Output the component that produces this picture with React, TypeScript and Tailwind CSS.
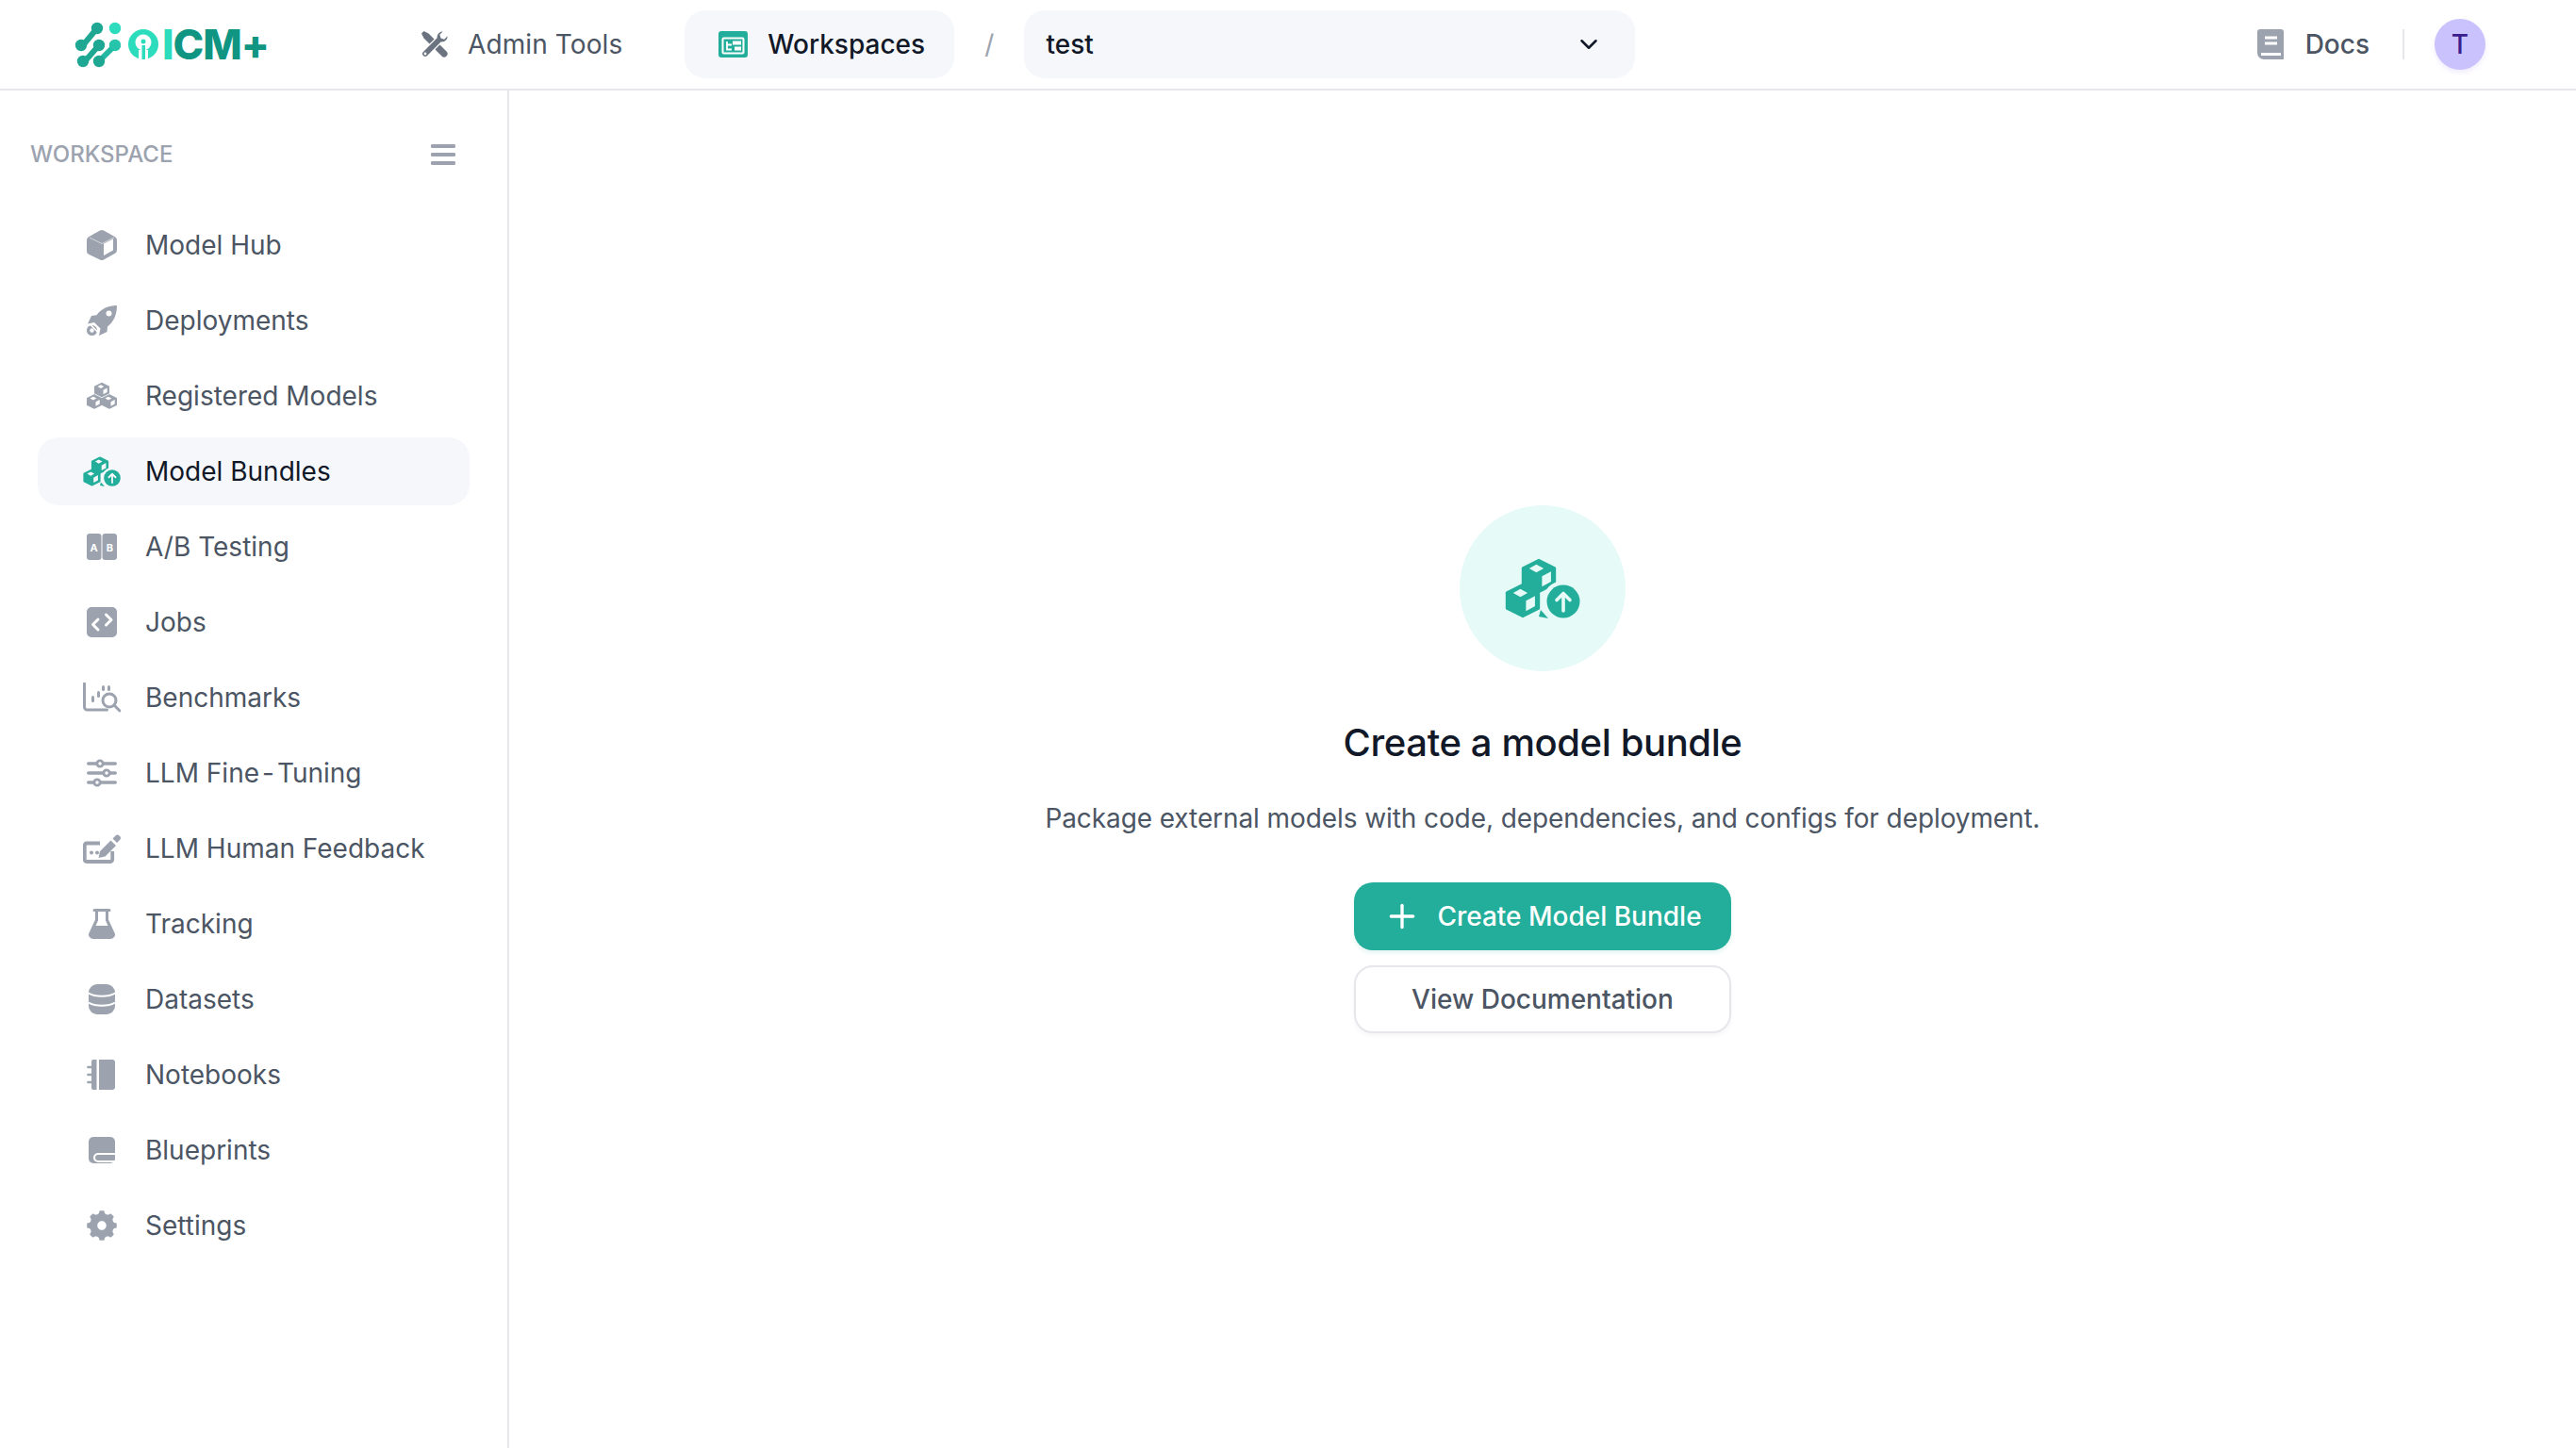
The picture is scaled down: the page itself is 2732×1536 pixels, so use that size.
import { ChevronDown, Plus } from 'lucide-react';
import { RiSettings5Fill } from 'react-icons/ri';
import type { ReactNode } from 'react';

const GRAY = '#9ca3af';
const TEAL = '#22ae9a';

function Cube({ cx, cy, w, h, fill, paper }: { cx: number; cy: number; w: number; h: number; fill: string; paper: string }) {
  const hex = [
    [cx, cy - h],
    [cx + w, cy - h / 2],
    [cx + w, cy + h / 2],
    [cx, cy + h],
    [cx - w, cy + h / 2],
    [cx - w, cy - h / 2],
  ]
    .map((p) => p.join(','))
    .join(' ');
  const top = [
    [cx - w * 0.15, cy - h * 0.72],
    [cx + w * 0.3, cy - h * 0.47],
    [cx - w * 0.15, cy - h * 0.22],
    [cx - w * 0.6, cy - h * 0.47],
  ]
    .map((p) => p.join(','))
    .join(' ');
  const side = [
    [cx + w * 0.2, cy + h * 0.02],
    [cx + w * 0.76, cy - h * 0.28],
    [cx + w * 0.76, cy + h * 0.36],
    [cx + w * 0.2, cy + h * 0.66],
  ]
    .map((p) => p.join(','))
    .join(' ');
  return (
    <g>
      <polygon points={hex} fill={fill} stroke={fill} strokeWidth={w * 0.14} strokeLinejoin="round" />
      <polygon points={top} fill={paper} />
      <polygon points={side} fill={paper} />
    </g>
  );
}

function BundleIcon({ className, paper }: { className: string; paper: string }) {
  return (
    <svg viewBox="0 0 80 64" className={className}>
      <Cube cx={36} cy={19} w={17} h={17} fill={TEAL} paper={paper} />
      <Cube cx={19} cy={45} w={17} h={17} fill={TEAL} paper={paper} />
      <circle cx={62} cy={46} r={22} fill={paper} />
      <path d="M38 55 L46 64 L36 62 Z" fill={TEAL} />
      <circle cx={62} cy={46} r={17.5} fill={TEAL} />
      <path d="M62 56V38M55 44.5l7-7 7 7" fill="none" stroke={paper} strokeWidth={3.6} strokeLinecap="round" strokeLinejoin="round" />
    </svg>
  );
}

function HubIcon() {
  return (
    <svg viewBox="0 0 32 32" className="h-[32px] w-[32px]">
      <path d="M14 .6a4 4 0 0 1 4 0l12 6.600a4 4 0 0 1 2 3.400v10.800a4 4 0 0 1-2 3.400l-12 6.600a4 4 0 0 1-4 0L2 25.800a4 4 0 0 1-2-3.400V10.600a4 4 0 0 1 2-3.400z" fill={GRAY} />
      <path d="M18 14.500l10-5v12l-10 5.500z" fill="#fff" />
      <path d="M3 8l13 6.500L29 8" fill="none" stroke="#fff" strokeWidth="0.8" opacity="0.7" />
    </svg>
  );
}

function RocketIcon() {
  return (
    <svg viewBox="0 0 32 32" className="h-[32px] w-[32px]">
      <path d="M32 0c0 10-3.500 17.500-10 22.500L21.500 28 13 32l1.500-7.500-6.500-6.500-7 1.500L5 11l5.500-.8C15.500 3.500 23 0 32 0z" fill={GRAY} />
      <circle cx="23.500" cy="8.500" r="3" fill="#fff" />
      <circle cx="5.500" cy="26.500" r="5.500" fill={GRAY} />
      <circle cx="5.500" cy="26.500" r="2.200" fill="#fff" />
      <path d="M4 20.500l7.500 7.500" stroke="#fff" strokeWidth="1.600" />
    </svg>
  );
}

function ModelsIcon() {
  return (
    <svg viewBox="0 0 32 28" className="h-[28px] w-[32px]">
      <Cube cx={16} cy={7.500} w={7.500} h={7.200} fill={GRAY} paper="#fff" />
      <Cube cx={8} cy={20} w={7.500} h={7.200} fill={GRAY} paper="#fff" />
      <Cube cx={24} cy={20} w={7.500} h={7.200} fill={GRAY} paper="#fff" />
    </svg>
  );
}

function AbIcon() {
  return (
    <svg viewBox="0 0 32 28" className="h-[28px] w-[32px]">
      <rect x="0" y="0" width="15.500" height="28" rx="3" fill={GRAY} />
      <rect x="16.500" y="0" width="15.500" height="28" rx="3" fill={GRAY} />
      <text x="7.500" y="18.500" textAnchor="middle" fontSize="11" fontWeight="700" fill="#fff" fontFamily="Inter, sans-serif">A</text>
      <text x="24.500" y="18.500" textAnchor="middle" fontSize="11" fontWeight="700" fill="#fff" fontFamily="Inter, sans-serif">B</text>
    </svg>
  );
}

function JobsIcon() {
  return (
    <svg viewBox="0 0 32 32" className="h-[32px] w-[32px]">
      <rect width="32" height="32" rx="5" fill={GRAY} />
      <path d="M12 13l-5.500 5.500L12 24M20.500 8l5.500 5.500-5.500 5.500" fill="none" stroke="#fff" strokeWidth="3" strokeLinecap="round" strokeLinejoin="round" />
    </svg>
  );
}

function BenchIcon() {
  return (
    <svg viewBox="0 0 40 32" className="h-[32px] w-[40px]">
      <path d="M1.500 1v25a3 3 0 0 0 3 3h21" fill="none" stroke={GRAY} strokeWidth="3" strokeLinecap="round" />
      <rect x="9" y="14" width="3" height="7" rx="1.500" fill={GRAY} />
      <rect x="15" y="9" width="3" height="7" rx="1.500" fill={GRAY} />
      <rect x="20" y="3" width="3" height="6" rx="1.500" fill={GRAY} />
      <rect x="26" y="3" width="3" height="6" rx="1.500" fill={GRAY} />
      <circle cx="28" cy="19" r="7" fill="none" stroke={GRAY} strokeWidth="3" />
      <path d="M33 24l6 6" stroke={GRAY} strokeWidth="3" strokeLinecap="round" />
    </svg>
  );
}

function TuneIcon() {
  return (
    <svg viewBox="0 0 32 30" className="h-[30px] w-[32px]" fill="none" stroke={GRAY} strokeWidth="3.400" strokeLinecap="round">
      <path d="M1.700 5h9M18 5h12.300M1.700 15h16M25 15h5.300M1.700 25h6M15 25h15.300" />
      <circle cx="14" cy="5" r="3.200" strokeWidth="2.800" />
      <circle cx="21" cy="15" r="3.200" strokeWidth="2.800" />
      <circle cx="11" cy="25" r="3.200" strokeWidth="2.800" />
    </svg>
  );
}

function FeedbackIcon() {
  return (
    <svg viewBox="0 0 40 32" className="h-[32px] w-[40px]">
      <path d="M18 10.500H4A2.500 2.500 0 0 0 1.800 13v14.500A2.500 2.500 0 0 0 4 30h25a2.500 2.500 0 0 0 2.200-2.500V19" fill="none" stroke={GRAY} strokeWidth="3.800" />
      <circle cx="9" cy="20.500" r="2" fill={GRAY} />
      <circle cx="15" cy="20.500" r="2" fill={GRAY} />
      <path d="M18 19l-1.500 7 7-1.500L35 13l-5.500-5.500zM31.500 5.500l3-3a2.800 2.800 0 0 1 4 0l.5.500a2.800 2.800 0 0 1 0 4l-3 3z" fill={GRAY} />
    </svg>
  );
}

function FlaskIcon() {
  return (
    <svg viewBox="0 0 28 32" className="h-[32px] w-[28px]">
      <path d="M6 0h16a1 1 0 0 1 0 3h-1v8.500l6.500 14A4.500 4.500 0 0 1 23.500 32h-19A4.500 4.500 0 0 1 .5 25.500L7 11.500V3H6a1 1 0 0 1 0-3z" fill={GRAY} />
      <path d="M10 3h8v9.500l2.500 5.500h-13l2.500-5.500z" fill="#fff" />
    </svg>
  );
}

function DatasetIcon() {
  return (
    <svg viewBox="0 0 28 32" className="h-[32px] w-[28px]">
      <rect width="28" height="32" rx="9" fill={GRAY} />
      <path d="M0 9.500c4 2.600 9 3.200 14 3.200s10-.6 14-3.200M0 19.500c4 2.600 9 3.200 14 3.200s10-.6 14-3.200" fill="none" stroke="#fff" strokeWidth="2" />
    </svg>
  );
}

function NotebookIcon() {
  return (
    <svg viewBox="0 0 32 32" className="h-[32px] w-[32px]">
      <path d="M5 2a2 2 0 0 1 2-2h3.500v32H7a2 2 0 0 1-2-2z" fill={GRAY} />
      <path d="M13 0h14a3 3 0 0 1 3 3v26a3 3 0 0 1-3 3H13z" fill={GRAY} />
      <path d="M1.500 8H5M1.500 16H5M1.500 24H5" stroke={GRAY} strokeWidth="2.600" strokeLinecap="round" />
    </svg>
  );
}

function BlueprintIcon() {
  return (
    <svg viewBox="0 0 28 28" className="h-[28px] w-[28px]">
      <rect width="28" height="28" rx="5" fill={GRAY} />
      <path d="M29 18H10a4 4 0 0 0 0 8h19" fill="none" stroke="#fff" strokeWidth="2" />
    </svg>
  );
}

function DocsIcon() {
  return (
    <svg viewBox="0 0 28 32" className="h-[32px] w-[28px]">
      <path d="M3 0h22a3 3 0 0 1 3 3v29H7a7 7 0 0 1-7-7V3a3 3 0 0 1 3-3z" fill={GRAY} />
      <path d="M8 9h13M8 15h13M4 26.500h21" stroke="#fff" strokeWidth="2.800" />
    </svg>
  );
}

function WorkspacesIcon() {
  return (
    <svg viewBox="0 0 31 28" className="h-[28px] w-[31px]">
      <rect width="31" height="28" rx="3" fill={TEAL} />
      <rect x="4.500" y="7.500" width="22" height="16" rx="1" fill="none" stroke="#fff" strokeWidth="2" />
      <rect x="15" y="10.500" width="9" height="4" fill="#fff" />
      <rect x="17" y="16.500" width="7" height="4" fill="#fff" />
      <path d="M9 11v8.500h5M9 14.500h5" fill="none" stroke="#fff" strokeWidth="1.800" />
    </svg>
  );
}

function ToolsIcon() {
  return (
    <svg viewBox="0 0 30 30" className="h-[30px] w-[30px]">
      <path d="M1 3.500L3.500 1l5 2.500L27.500 22.500a3.500 3.500 0 0 1-5 5L3.500 8.500z" fill="#6b7280" />
      <path d="M2.500 22.500L17 8a6.500 6.500 0 0 1 8-7l-4 4 1 3 3 1 4-4a6.500 6.500 0 0 1-7 8L7.500 27.500a3.500 3.500 0 0 1-5-5z" fill="#6b7280" stroke="#fff" strokeWidth="1.200" />
      <circle cx="5" cy="25" r="1.400" fill="#fff" />
    </svg>
  );
}

function MenuIcon() {
  return (
    <svg viewBox="0 0 26 22" className="h-[22px] w-[26px]">
      <path d="M1.500 2h23M1.500 11h23M1.500 20h23" stroke={GRAY} strokeWidth="3.800" strokeLinecap="round" />
    </svg>
  );
}

function LogoMark() {
  const dots = [
    [103, 29],
    [122, 29],
    [86, 47],
    [105, 47],
    [122, 47],
    [88, 64],
    [105, 64],
  ];
  const links = [
    [103, 29, 88, 47],
    [105, 47, 90, 64],
    [122, 47, 105, 64],
  ];
  return (
    <svg viewBox="78 20 50 52" className="h-[52px] w-[50px]">
      <g>
        {links.map(([a, b, c, d], i) => (
          <line key={i} x1={a} y1={b} x2={c} y2={d} strokeWidth="6" stroke={i === 2 ? '#22b8a1' : '#1ea893'} />
        ))}
        {dots.map(([x, y], i) => (
          <circle key={i} cx={x} cy={y} r="6.200" fill={i === 1 ? '#2ddcbd' : x > 110 ? '#25c4ab' : '#1ea893'} />
        ))}
      </g>
    </svg>
  );
}

function LogoRing() {
  return (
    <svg viewBox="0 0 32 32" className="h-[32px] w-[32px]">
      <circle cx="16" cy="16" r="16" fill="#2ddcbd" />
      <circle cx="16" cy="14" r="8.500" fill="#fff" />
      <circle cx="16" cy="13" r="2.500" fill="#2ddcbd" />
      <path d="M14.500 17h3.500v15h-3.500z" fill="#2ddcbd" />
      <path d="M11 22h3.500v10H11zM18 22h3v10h-3z" fill="#fff" />
    </svg>
  );
}

const items: { label: ReactNode; id: string; icon: ReactNode; active?: boolean }[] = [
  { id: 'hub', label: 'Model Hub', icon: <HubIcon /> },
  { id: 'dep', label: 'Deployments', icon: <RocketIcon /> },
  { id: 'reg', label: 'Registered Models', icon: <ModelsIcon /> },
  { id: 'bun', label: 'Model Bundles', active: true, icon: <BundleIcon className="h-[32px] w-[40px]" paper="#f5f7fb" /> },
  { id: 'ab', label: 'A/B Testing', icon: <AbIcon /> },
  { id: 'job', label: 'Jobs', icon: <JobsIcon /> },
  { id: 'ben', label: 'Benchmarks', icon: <BenchIcon /> },
  {
    id: 'fin',
    label: (
      <>
        LLM Fine<span className="mx-[3px]">-</span>Tuning
      </>
    ),
    icon: <TuneIcon />,
  },
  { id: 'fee', label: 'LLM Human Feedback', icon: <FeedbackIcon /> },
  { id: 'tra', label: 'Tracking', icon: <FlaskIcon /> },
  { id: 'dat', label: 'Datasets', icon: <DatasetIcon /> },
  { id: 'not', label: 'Notebooks', icon: <NotebookIcon /> },
  { id: 'blu', label: 'Blueprints', icon: <BlueprintIcon /> },
  { id: 'set', label: 'Settings', icon: <RiSettings5Fill size={38} color={GRAY} /> },
];

function Header() {
  return (
    <header className="flex h-[96px] shrink-0 items-center border-b-2 border-[#e5e7eb] pl-[78px] pr-[96px]">
      <div className="flex w-[368px] shrink-0 items-center">
        <LogoMark />
        <div className="ml-[8px] flex items-center text-[44px] font-extrabold leading-none tracking-[-1px]">
          <LogoRing />
          <span className="ml-[4px] text-[#2ddcbd]">I</span>
          <span className="text-[#0f9582]">CM+</span>
        </div>
      </div>
      <div className="flex items-center gap-[20px] text-[#4b5563]">
        <ToolsIcon />
        <span className="tracking-[0.1px]">Admin Tools</span>
      </div>
      <div className="ml-[66px] flex h-[72px] w-[286px] shrink-0 items-center gap-[21px] rounded-[22px] bg-[#f5f7fb] pl-[36px] font-medium text-[#111827]">
        <WorkspacesIcon />
        <span>Workspaces</span>
      </div>
      <span className="mx-[32px] text-[#9ca3af]">/</span>
      <div className="flex h-[72px] w-[648px] shrink-0 items-center justify-between rounded-[22px] bg-[#f5f7fb] pl-[23px] pr-[34px] font-medium text-[#111827]">
        <span>test</span>
        <ChevronDown size={30} color="#111827" />
      </div>
      <div className="ml-auto flex items-center">
        <DocsIcon />
        <span className="ml-[23px] font-medium text-[#4b5563]">Docs</span>
        <span className="ml-[35px] h-[32px] w-[2px] bg-[#e5e7eb]" />
        <div className="ml-[32px] flex h-[54px] w-[54px] items-center justify-center rounded-full bg-[#c9c2fd] font-medium text-[#3b1d8f] shadow-[0_3px_5px_rgba(139,92,246,0.12)]">
          T
        </div>
      </div>
    </header>
  );
}

function Sidebar() {
  return (
    <aside className="w-[540px] shrink-0 border-r-2 border-[#e5e7eb]">
      <div className="mb-[41px] mt-[49px] flex h-[38px] items-center justify-between pl-[32px] pr-[55px]">
        <span className="text-[24px] font-medium text-[#9ca3af]">WORKSPACE</span>
        <MenuIcon />
      </div>
      <nav className="flex flex-col gap-[8px] pl-[40px] pr-[40px]">
        {items.map((item) => (
          <div
            key={item.id}
            className={
              item.active
                ? 'flex h-[72px] items-center gap-[26px] rounded-[22px] bg-[#f5f7fb] pl-[48px] text-[#111827]'
                : 'flex h-[72px] items-center gap-[26px] rounded-[22px] pl-[48px] text-[#4b5563]'
            }
          >
            <span className="flex h-[40px] w-[40px] shrink-0 items-center justify-center">{item.icon}</span>
            <span>{item.label}</span>
          </div>
        ))}
      </nav>
    </aside>
  );
}

export default function App() {
  return (
    <div className="flex h-screen flex-col overflow-hidden bg-white font-['Inter',sans-serif] text-[28px]">
      <Header />
      <div className="flex min-h-0 flex-1">
        <Sidebar />
        <main className="flex flex-1 flex-col items-center justify-center">
          <div className="flex h-[176px] w-[176px] items-center justify-center rounded-full bg-[#e6faf7]">
            <BundleIcon className="h-[64px] w-[80px]" paper="#e6faf7" />
          </div>
          <h1 className="mt-[48px] text-[40px] font-medium leading-[56px] tracking-[-0.4px] text-[#111827]">Create a model bundle</h1>
          <p className="mt-[32px] leading-[40px] tracking-[-0.09px] text-[#4b5563]">
            Package external models with code, dependencies, and configs for deployment.
          </p>
          <button className="mt-[48px] flex h-[72px] w-[400px] items-center justify-center gap-[17px] rounded-[20px] bg-[#22ae9a] font-medium text-white shadow-[0_3px_4px_rgba(34,174,154,0.12)]">
            <Plus size={40} strokeWidth={2} />
            <span>Create Model Bundle</span>
          </button>
          <button className="mt-[16px] flex h-[72px] w-[400px] items-center justify-center rounded-[20px] border-2 border-[#e5e7eb] bg-white font-medium text-[#4b5563] shadow-[0_3px_4px_rgba(0,0,0,0.04)]">
            View Documentation
          </button>
        </main>
      </div>
    </div>
  );
}
